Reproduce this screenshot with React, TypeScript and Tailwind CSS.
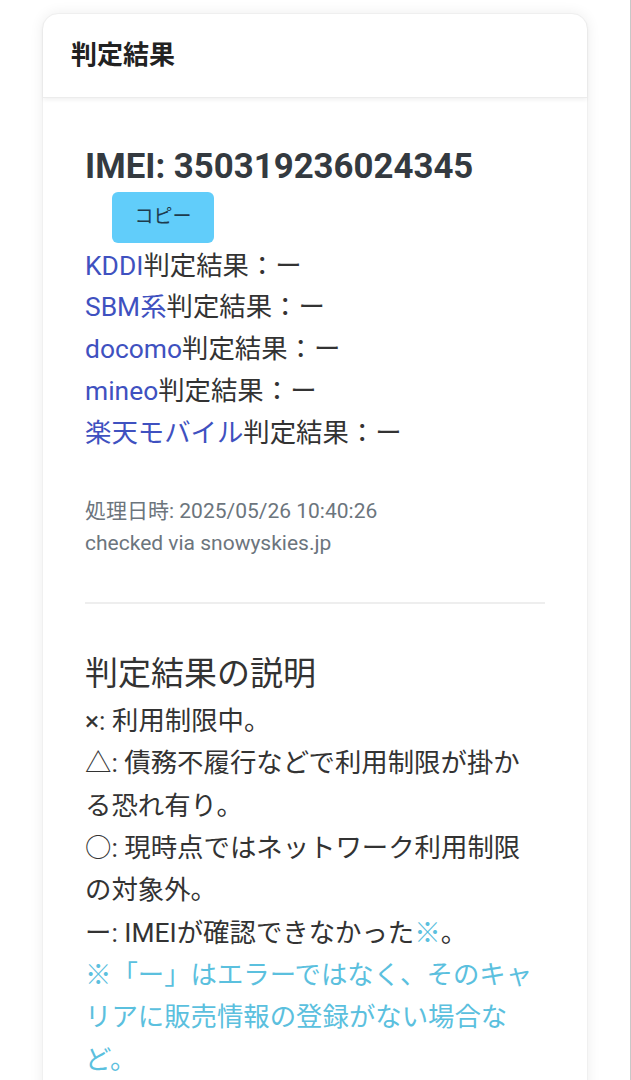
import React from 'react'

const carriers = ['KDDI', 'SBM系', 'docomo', 'mineo', '楽天モバイル']

const App: React.FC = () => {
  return (
    <div
      className="min-h-[1080px] bg-white border-r border-[#c8c8c8] pt-[13px] px-[42px]"
      style={{ fontFamily: 'Roboto, "Noto Sans CJK JP", sans-serif' }}
    >
      <div className="rounded-t-[16px] bg-white shadow-[0_0_14px_rgba(0,0,0,0.07)] border border-[#f0f0f0]">
        {/* ヘッダー */}
        <div className="h-[84px] flex items-center px-[28px] rounded-t-[16px] border-b border-[#ececec] shadow-[0_2px_4px_rgba(0,0,0,0.06)]">
          <h2 className="text-[26px] font-bold text-[#222]">判定結果</h2>
        </div>

        {/* 本文 */}
        <div className="px-[42px] pt-[48px] pb-[20px] text-[#333]">
          <h1 className="text-[34.8px] font-bold leading-[1.2] text-[#343a40]">
            IMEI: 350319236024345
          </h1>
          <button className="ml-[27px] mt-[4px] w-[102px] h-[51px] rounded-[6px] bg-[#61cdfa] text-[19px] text-[#1d3b4d]">
            コピー
          </button>

          <div className="mt-[3px] text-[26.4px] leading-[41.7px]">
            {carriers.map((c) => (
              <div key={c}>
                <span className="text-[#3f51c0]">{c}</span>判定結果：ー
              </div>
            ))}
          </div>

          <div className="mt-[41px] text-[21px] leading-[32px] text-[#6c757d]">
            <div>処理日時: 2025/05/26 10:40:26</div>
            <div>checked via snowyskies.jp</div>
          </div>

          <hr className="mt-[43px] border-t-2 border-[#eeeeee]" />

          <h3 className="mt-[49px] text-[33px] leading-[1.3] text-[#333]">判定結果の説明</h3>
          <div className="mt-[4px] w-[455px] text-[26.4px] leading-[42.3px]">
            <div>×: 利用制限中。</div>
            <div>△: 債務不履行などで利用制限が掛かる恐れ有り。</div>
            <div>○: 現時点ではネットワーク利用制限の対象外。</div>
            <div>
              ー: IMEIが確認できなかった<span className="text-[#5bc0de]">※</span>。
            </div>
            <div className="text-[#5bc0de]">
              ※「ー」はエラーではなく、そのキャリアに販売情報の登録がない場合など。
            </div>
          </div>
        </div>
      </div>
    </div>
  )
}

export default App
